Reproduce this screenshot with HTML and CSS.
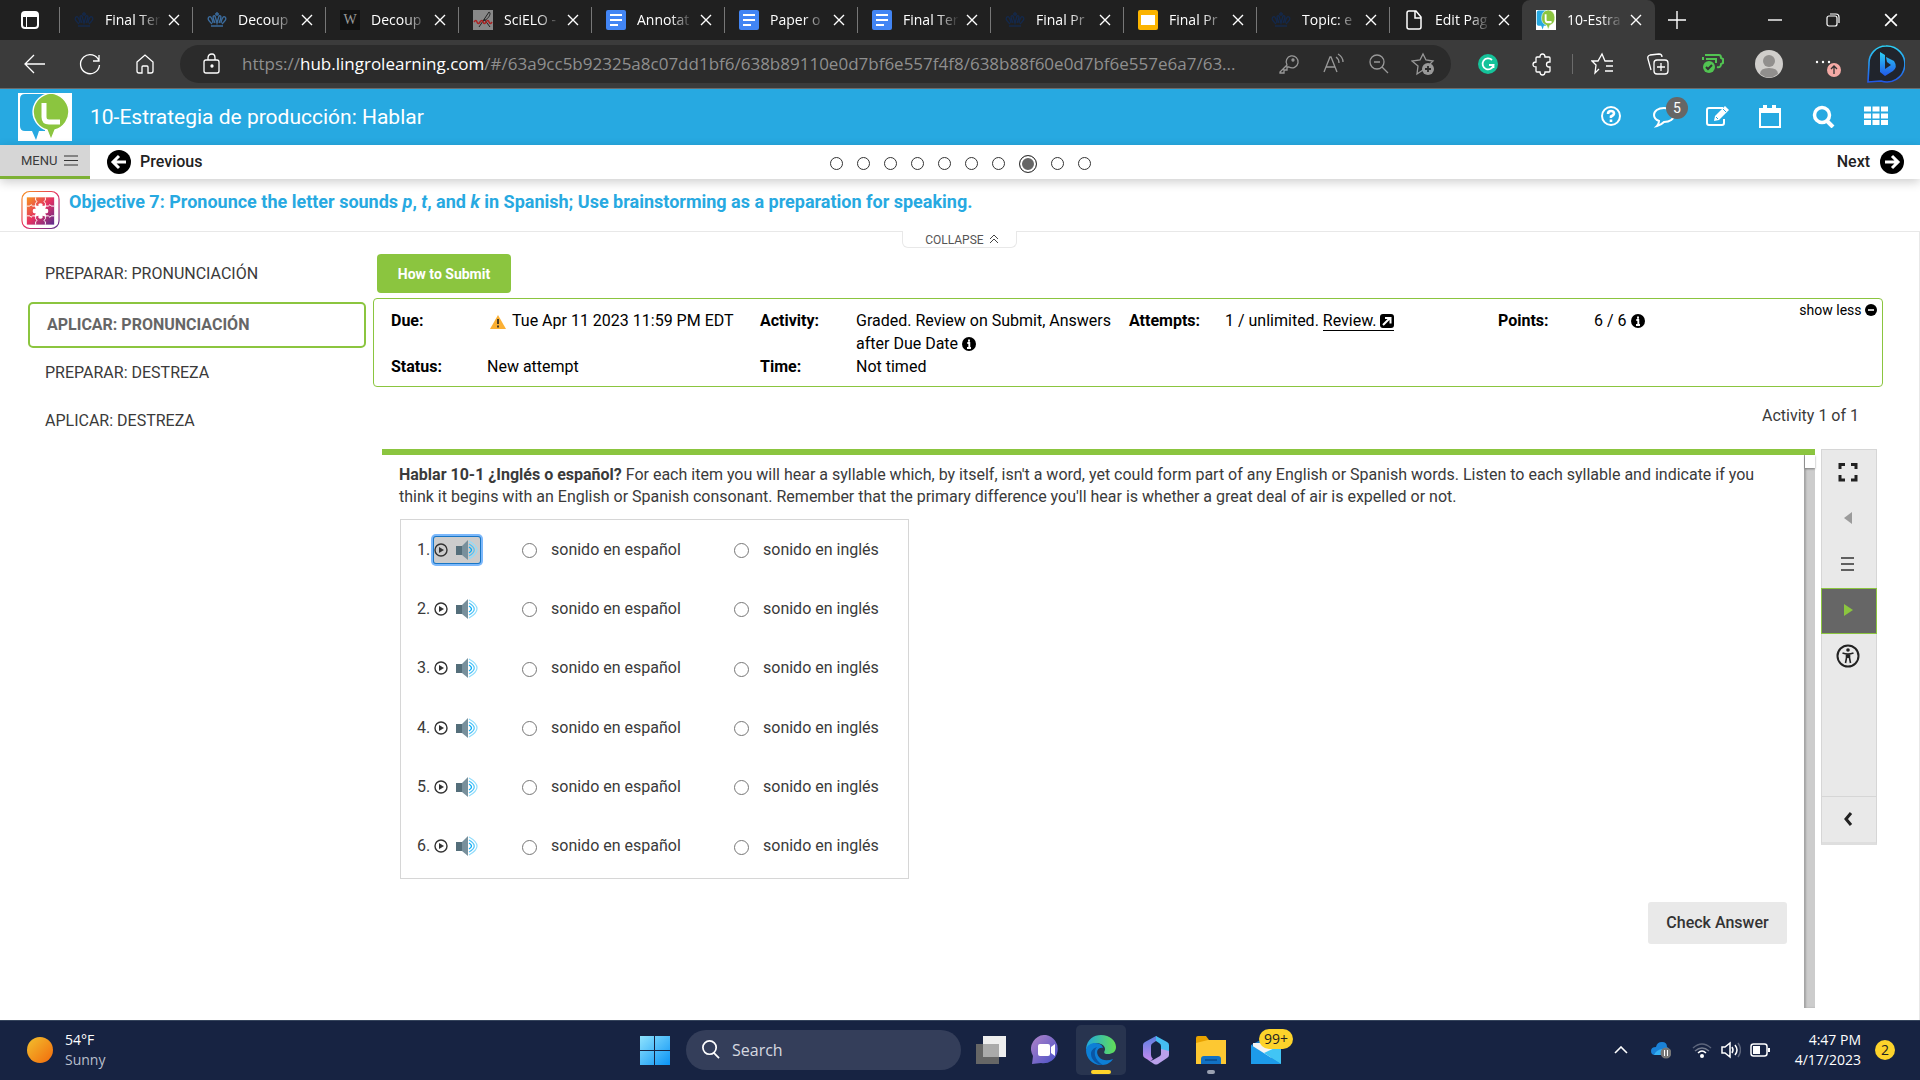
FILE: index.html
```html
<!DOCTYPE html>
<html lang="en">
<head>
<meta charset="utf-8">
<title>10-Estrategia de producción: Hablar</title>
<link rel="stylesheet" href="styles.css">
</head>
<body>
<svg class="defs" aria-hidden="true">
  <symbol id="x" viewBox="0 0 12 12"><path d="M1 1l10 10M11 1L1 11" stroke="#fff" stroke-width="1.4" fill="none"/></symbol>
  <symbol id="crown" viewBox="0 0 20 20"><path d="M4 16h12M5 14C2 11 0 9 2 7c1-1 3 0 4 6M15 14c3-3 5-5 3-7-1-1-3 0-4 6M8 13C5 7 6 5 8 6l2 7 2-7c2-1 3 1 0 7M10 2v4M8 4h4" fill="none" stroke="currentColor" stroke-width="1.4"/></symbol>
  <symbol id="doc" viewBox="0 0 20 20"><rect width="20" height="20" rx="2" fill="#4285f4"/><path d="M4 5h12M4 10h12M4 15h8" stroke="#fff" stroke-width="2.2"/></symbol>
  <symbol id="brand" viewBox="0 0 54 48"><path fill="#fff" d="M0 0h54v48H0z"/><path d="M7 1h20v37h-6l-3 9-4-9H7q-5 0-5-5V6q0-5 5-5z" fill="#27a9e1"/><path d="M33 0a20 19 0 0 1 4 37l-4 10-4-10A20 19 0 0 1 33 0z" fill="#8bc53f" stroke="#fff" stroke-width="1.4"/><path d="M26 10v14q0 5 5 5h11" fill="none" stroke="#fff" stroke-width="5"/></symbol>
  <symbol id="play" viewBox="0 0 14 14"><circle cx="7" cy="7" r="6" fill="none" stroke="#333" stroke-width="1.4"/><path d="M5 4l5 3-5 3z" fill="#333"/></symbol>
  <symbol id="speaker" viewBox="0 0 22 20"><path d="M0 6h6v9H0z" fill="#546e7a"/><path d="M6 6l6-6v20l-6-5z" fill="#78909c"/><path d="M13 7q5 3 0 6" fill="none" stroke="#03a9f4" stroke-width="1.300"/><path d="M13 4q10.500 6 0 12" fill="none" stroke="#4fc3f7" stroke-width="1.200"/><path d="M13 1q16 9 0 18" fill="none" stroke="#90dcfb" stroke-width="1.200"/></symbol>
  <symbol id="info" viewBox="0 0 14 14"><circle cx="7" cy="7" r="7" fill="#000"/><path d="M7 2.500v2.200M5.300 6h2v5M5 11h4" stroke="#fff" stroke-width="1.900" fill="none"/></symbol>
  <symbol id="arrow" viewBox="0 0 24 24"><circle cx="12" cy="12" r="12" fill="#000"/><path d="M5 12h13M12 6l6 6-6 6" fill="none" stroke="#fff" stroke-width="3"/></symbol>
</svg>

<div class="tabs">
  <svg class="tabmenu" viewBox="0 0 18 18"><rect x="1" y="1" width="16" height="16" rx="3" fill="none" stroke="#fff" stroke-width="2"/><path d="M1 2h16v4H1z" fill="#fff"/><path d="M5.500 5v11" stroke="#fff"/></svg>
  <div class="tab"><svg class="fav navy"><use href="#crown"/></svg><span class="name">Final Ter</span><button aria-label="Close"><svg><use href="#x"/></svg></button></div>
  <div class="tab"><svg class="fav steel"><use href="#crown"/></svg><span class="name">Decoup</span><button aria-label="Close"><svg><use href="#x"/></svg></button></div>
  <div class="tab"><span class="fav w">W</span><span class="name">Decoup</span><button aria-label="Close"><svg><use href="#x"/></svg></button></div>
  <div class="tab"><svg class="fav" viewBox="0 0 20 20"><path fill="#888" d="M0 0h20v20H0z"/><path d="M6 17L16 2c3 1-1 8-6 9M11 9l6 8" stroke="#222" fill="none"/><path d="M1 12q2-3 3 0t3 0 3 0 3 0 3 0 3 0" stroke="#a22" fill="none" stroke-width="1.500"/></svg><span class="name">SciELO -</span><button aria-label="Close"><svg><use href="#x"/></svg></button></div>
  <div class="tab"><svg class="fav"><use href="#doc"/></svg><span class="name">Annotat</span><button aria-label="Close"><svg><use href="#x"/></svg></button></div>
  <div class="tab"><svg class="fav"><use href="#doc"/></svg><span class="name">Paper o</span><button aria-label="Close"><svg><use href="#x"/></svg></button></div>
  <div class="tab"><svg class="fav"><use href="#doc"/></svg><span class="name">Final Ter</span><button aria-label="Close"><svg><use href="#x"/></svg></button></div>
  <div class="tab"><svg class="fav navy"><use href="#crown"/></svg><span class="name">Final Pr</span><button aria-label="Close"><svg><use href="#x"/></svg></button></div>
  <div class="tab"><svg class="fav" viewBox="0 0 20 20"><rect width="20" height="20" rx="2" fill="#fbb400"/><path d="M3 5h14v10H3z" fill="#fff"/></svg><span class="name">Final Pr</span><button aria-label="Close"><svg><use href="#x"/></svg></button></div>
  <div class="tab"><svg class="fav navy"><use href="#crown"/></svg><span class="name">Topic: e</span><button aria-label="Close"><svg><use href="#x"/></svg></button></div>
  <div class="tab"><svg class="fav" viewBox="0 0 20 20"><path d="M5 1h7l5 6v10q0 2-2 2H5q-2 0-2-2V3q0-2 2-2zM11 1v7h6" fill="none" stroke="#fff" stroke-width="1.500"/></svg><span class="name">Edit Pag</span><button aria-label="Close"><svg><use href="#x"/></svg></button></div>
  <div class="tab active"><svg class="fav" viewBox="0 0 54 48" preserveAspectRatio="none"><use href="#brand"/></svg><span class="name">10-Estra</span><button aria-label="Close"><svg><use href="#x"/></svg></button></div>
  <button class="newtab" aria-label="New tab"><svg viewBox="0 0 18 18"><path d="M9 0v18M0 9h18" stroke="#fff" stroke-width="1.400"/></svg></button>
  <div class="wincontrols">
    <button aria-label="Minimize"><svg viewBox="0 0 14 14"><path d="M0 7h14" stroke="#fff" stroke-width="1.400"/></svg></button>
    <button aria-label="Restore"><svg viewBox="0 0 14 14"><rect x="1" y="3" width="10" height="10" rx="2" fill="none" stroke="#fff" stroke-width="1.200"/><path d="M4 1h6q3 0 3 3v6" fill="none" stroke="#fff" stroke-width="1.200"/></svg></button>
    <button aria-label="Close window"><svg viewBox="0 0 12 12"><use href="#x"/></svg></button>
  </div>
</div>

<div class="toolbar">
  <div class="navs">
    <button aria-label="Back"><svg viewBox="0 0 24 24"><path d="M22 12H3M11 3l-9 9 9 9"/></svg></button>
    <button aria-label="Reload"><svg viewBox="0 0 24 24"><path d="M21 9a9.500 9.500 0 1 0 .5 4M21 3v6h-6"/></svg></button>
    <button aria-label="Home"><svg viewBox="0 0 24 24"><path d="M4 10l8-7 8 7v9q0 2-2 2h-3v-6q0-1-1-1h-4q-1 0-1 1v6H6q-2 0-2-2z"/></svg></button>
  </div>
  <div class="address">
    <svg viewBox="0 0 24 24"><rect x="4" y="8" width="15" height="13" rx="2"/><path d="M8 8V6q0-4 4-4 3 0 3 4v2"/><circle cx="12" cy="14" r="1" fill="#fff"/></svg>
    <span class="url">https://<b>hub.lingrolearning.com</b>/#/63a9cc5b92325a8c07dd1bf6/638b89110e0d7bf6e557f4f8/638b88f60e0d7bf6e557e6a7/63...</span>
    <div class="inbar">
      <svg viewBox="0 0 24 24"><path d="M11 13L4 20v1h4v-3h3v-3h2a6 6 0 1 0-2-2z"/><circle cx="17" cy="8" r="1"/></svg>
      <svg viewBox="0 0 24 24"><path d="M3 20L9 5h1l6 15M5 15h9M15 5q3 2 3 6M17 2q5 3 5 8"/></svg>
      <svg viewBox="0 0 24 24"><circle cx="11" cy="10" r="7"/><path d="M16 15l6 6M8 10h6"/></svg>
      <svg viewBox="0 0 24 24"><path d="M12 18l-6 4 1-8-6-5 8-1 3-6 3 6 7 1-3 3"/><circle cx="17" cy="17" r="6" fill="#999" stroke="none"/><path d="M17 14v6M14 17h6" stroke="#2b2b2b" stroke-width="1.800"/></svg>
    </div>
  </div>
  <div class="extensions">
    <button aria-label="Grammarly"><svg viewBox="0 0 24 24"><circle cx="12" cy="12" r="10" fill="#15c39a" stroke="none"/><path d="M16 8a5.500 5.500 0 1 0 1.500 5H13M17.500 12v4" stroke-width="1.800"/></svg></button>
    <button aria-label="Extensions"><svg viewBox="0 0 24 24"><path d="M6 5h3q0-3 2.500-3T14 5h4q1 0 1 1v4h-1q-2.500 0-2.500 2.500T18 15h1v4q0 1-1 1h-4q0 3-2.500 3T9 20H6q-1 0-1-1v-4q-3 0-3-2.500T5 10V6q0-1 1-1z"/></svg></button>
    <i></i>
    <button aria-label="Favorites"><svg viewBox="0 0 24 24"><path d="M8 17l-4 4 1-8-4-4h6l4-7 3 7h8M15 14h7M14 19h8"/></svg></button>
    <button aria-label="Collections"><svg viewBox="0 0 24 24"><rect x="8" y="8" width="14" height="14" rx="3"/><path d="M15 11v8M11 15h8M5 18L2 7q-1-3 2-4l9-1q3 0 3 3"/></svg></button>
    <button aria-label="Battery saver"><svg class="green" viewBox="0 0 24 24"><path d="M4 3h14q2 0 2 3l2 1v4l-2 1q0 4-4 3M2 8V5M5 7h10v4"/><circle cx="8" cy="15" r="6" fill="#52c452" stroke="none"/><path d="M5 15l2 2 4-4" stroke="#333"/></svg></button>
    <button class="profile" aria-label="Profile"><svg class="avatar" viewBox="0 0 28 28"><circle cx="14" cy="14" r="14" fill="#d0cecb" stroke="none"/><circle cx="14" cy="11" r="6" fill="#918f8d" stroke="none"/><path d="M5 24q0-6 9-6t9 6q-9 7-18 0z" fill="#918f8d" stroke="none"/></svg></button>
    <button class="menu-more" aria-label="More"><svg class="more" viewBox="0 0 30 28"><g fill="#fff" stroke="none"><circle cx="4" cy="12" r="1.200"/><circle cx="10" cy="12" r="1.200"/><circle cx="16" cy="12" r="1.200"/></g><circle cx="21" cy="20" r="7" fill="#f5aaa5" stroke="none"/><path d="M21 24v-8M18 19l3-3 3 3" stroke="#333"/></svg></button>
    <button aria-label="Bing"><svg class="bing" viewBox="0 0 38 38"><defs><linearGradient id="bg" x2="0" y2="1"><stop stop-color="#2bd0f5"/><stop offset="1" stop-color="#2157e8"/></linearGradient></defs><path d="M19 1a18 18 0 1 1-5 35l-13 1 1-18A17 17 0 0 1 19 1z" fill="#20242c" stroke="url(#bg)" stroke-width="1.600"/><path d="M13 7l5 3v14l6-4-4-3-1-5 8 4q4 6-1 10l-8 5-5-4z" fill="url(#bg)" stroke="none"/></svg></button>
  </div>
</div>

<header class="appbar">
  <svg class="logo" viewBox="0 0 54 48"><use href="#brand"/></svg>
  <h1>10-Estrategia de producción: Hablar</h1>
  <div class="appicons">
    <button aria-label="Help"><svg viewBox="0 0 24 24"><circle cx="12" cy="12" r="9"/><path d="M9 10q0-3 3-3t3 2.500q0 1.500-3 3V14M12 15.500V18" stroke-width="2.600"/></svg></button>
    <button aria-label="Messages"><svg viewBox="0 0 24 24"><path d="M12 4c6 0 10 3 10 7s-4 7-10 7q-3 3-7 4 2-2 2-5-5-2-5-6c0-4 4-7 10-7z"/></svg><span class="count">5</span></button>
    <button aria-label="Write"><svg viewBox="0 0 24 24"><path d="M18 4H4Q2 4 2 6v13q0 2 2 2h13q2 0 2-2v-4"/><path d="M9 17l1-5L20 2l4 4-10 10z" fill="#fff" stroke="none"/><path d="M18 5l3 3M11 13l2 2" stroke="#27a9e1" stroke-width="1"/></svg></button>
    <button aria-label="Calendar"><svg viewBox="0 0 24 24"><path d="M2 5h20v18H2z"/><path d="M1 4h22v5H1zM5 1h4v5H5zM14 1h4v5h-4z" fill="#fff" stroke="none"/></svg></button>
    <button aria-label="Search"><svg viewBox="0 0 24 24"><circle cx="11" cy="11" r="7.500" stroke-width="3.500"/><path d="M16 17l6 6" stroke-width="4"/></svg></button>
    <button aria-label="Apps"><svg viewBox="0 0 24 24"><path d="M0 5h24M0 12h24M0 18.500h24" stroke-width="5" stroke-dasharray="7 1.500"/></svg></button>
  </div>
</header>

<nav class="pager">
  <button class="menu">MENU <svg viewBox="0 0 14 11"><path d="M0 1h14M0 5.500h14M0 10h14"/></svg></button>
  <a class="prev" href="#"><svg class="flip"><use href="#arrow"/></svg>Previous</a>
  <div class="dots"><i></i><i></i><i></i><i></i><i></i><i></i><i></i><i class="on"></i><i></i><i></i></div>
  <a class="next" href="#">Next<svg><use href="#arrow"/></svg></a>
</nav>

<section class="objective">
  <svg viewBox="0 0 40 40"><defs><linearGradient id="pz" x2="1" y2="1"><stop stop-color="#f7941e"/><stop offset=".5" stop-color="#e32f62"/><stop offset="1" stop-color="#5b2d90"/></linearGradient></defs><rect x="1" y="1" width="38" height="38" rx="8" fill="#fff" stroke="url(#pz)" stroke-width="1.200"/><path d="M6 7h28v28H6z" fill="url(#pz)"/><path d="M15 7v3q3 1 0 3v3M25 7v3q-3 1 0 3v3M6 16h3q1-3 3 0h3M6 26h3q1 3 3 0h3M34 16h-3q-1-3-3 0h-3M34 26h-3q-1 3-3 0h-3M15 35v-3q3-1 0-3v-3M25 35v-3q-3-1 0-3v-3" fill="none" stroke="#fff"/><path d="M14 15l4 1q-1-3 2-3t2 3l4-1-1 4q3-1 3 2t-3 2l1 4-4-1q1 3-2 3t-2-3l-4 1 1-4q-3 1-3-2t3-2z" fill="#fff"/></svg>
  <h2>Objective 7: Pronounce the letter sounds <em>p</em>, <em>t</em>, and <em>k</em> in Spanish; Use brainstorming as a preparation for speaking.</h2>
  <button class="collapse">COLLAPSE <svg viewBox="0 0 10 10"><path d="M1 5l4-4 4 4M1 9l4-4 4 4"/></svg></button>
</section>

<main>
  <aside>
    <a href="#">PREPARAR: PRONUNCIACIÓN</a>
    <a href="#" class="current">APLICAR: PRONUNCIACIÓN</a>
    <a href="#">PREPARAR: DESTREZA</a>
    <a href="#">APLICAR: DESTREZA</a>
  </aside>
  <div class="content">
    <button class="how">How to Submit</button>
    <section class="details">
      <dl>
        <dt>Due:</dt><dd><svg class="warn" viewBox="0 0 16 14"><path d="M8 0l8 14H0z" fill="#fbb034"/><path d="M8 4v5M8 10.500v2" stroke="#222" stroke-width="1.600"/></svg>Tue Apr 11 2023 11:59 PM EDT</dd>
        <dt>Activity:</dt><dd>Graded. Review on Submit, Answers after Due Date <svg class="sm"><use href="#info"/></svg></dd>
        <dt>Attempts:</dt><dd>1 / unlimited. <a href="#">Review. <svg class="sm" viewBox="0 0 14 14"><rect width="14" height="14" rx="3" fill="#000"/><path d="M3 11l7-7M5 4h5.500v5.500" stroke="#fff" stroke-width="2" fill="none"/></svg></a></dd>
        <dt>Points:</dt><dd>6 / 6 <svg class="sm"><use href="#info"/></svg></dd>
        <dt>Status:</dt><dd>New attempt</dd>
        <dt>Time:</dt><dd>Not timed</dd>
      </dl>
      <button class="less">show less <svg viewBox="0 0 12 12"><circle cx="6" cy="6" r="6"/><path d="M3 6h6" stroke="#fff" stroke-width="1.600"/></svg></button>
    </section>
    <p class="counter">Activity 1 of 1</p>
    <div class="activity">
      <section class="panel">
        <div class="work">
          <p><b>Hablar 10-1 ¿Inglés o español?</b> For each item you will hear a syllable which, by itself, isn't a word, yet could form part of any English or Spanish words. Listen to each syllable and indicate if you think it begins with an English or Spanish consonant. Remember that the primary difference you'll hear is whether a great deal of air is expelled or not.</p>
          <form class="questions">
            <div class="q"><span>1.</span><button type="button" class="audio focus" aria-label="Play 1"><svg class="pl"><use href="#play"/></svg><svg class="sp"><use href="#speaker"/></svg></button><label><input type="radio" name="q1">sonido en español</label><label><input type="radio" name="q1">sonido en inglés</label></div>
            <div class="q"><span>2.</span><button type="button" class="audio" aria-label="Play 2"><svg class="pl"><use href="#play"/></svg><svg class="sp"><use href="#speaker"/></svg></button><label><input type="radio" name="q2">sonido en español</label><label><input type="radio" name="q2">sonido en inglés</label></div>
            <div class="q"><span>3.</span><button type="button" class="audio" aria-label="Play 3"><svg class="pl"><use href="#play"/></svg><svg class="sp"><use href="#speaker"/></svg></button><label><input type="radio" name="q3">sonido en español</label><label><input type="radio" name="q3">sonido en inglés</label></div>
            <div class="q"><span>4.</span><button type="button" class="audio" aria-label="Play 4"><svg class="pl"><use href="#play"/></svg><svg class="sp"><use href="#speaker"/></svg></button><label><input type="radio" name="q4">sonido en español</label><label><input type="radio" name="q4">sonido en inglés</label></div>
            <div class="q"><span>5.</span><button type="button" class="audio" aria-label="Play 5"><svg class="pl"><use href="#play"/></svg><svg class="sp"><use href="#speaker"/></svg></button><label><input type="radio" name="q5">sonido en español</label><label><input type="radio" name="q5">sonido en inglés</label></div>
            <div class="q"><span>6.</span><button type="button" class="audio" aria-label="Play 6"><svg class="pl"><use href="#play"/></svg><svg class="sp"><use href="#speaker"/></svg></button><label><input type="radio" name="q6">sonido en español</label><label><input type="radio" name="q6">sonido en inglés</label></div>
          </form>
          <button class="check">Check Answer</button>
        </div>
        <div class="gutter"><div class="knob"></div></div>
      </section>
      <div class="rail">
        <button aria-label="Full screen"><svg viewBox="0 0 24 24"><path d="M4 9V4.500h5M15 4.500h5V9M20 15v5h-5M9 20H4v-5" fill="none" stroke="#222" stroke-width="3"/></svg></button>
        <button aria-label="Previous item"><svg viewBox="0 0 24 24"><path d="M16 6v12l-8-6z" fill="#9b9b9b"/></svg></button>
        <button aria-label="List"><svg viewBox="0 0 24 24"><path d="M5 6h13M5 12h13M5 18h13" stroke="#333" stroke-width="1.400"/></svg></button>
        <button class="lit" aria-label="Next item"><svg viewBox="0 0 24 24"><path d="M8 6v12l9-6z" fill="#8bc53f"/></svg></button>
        <button aria-label="Accessibility"><svg viewBox="0 0 24 24"><circle cx="12" cy="12" r="10.500" fill="none" stroke="#222" stroke-width="2"/><circle cx="12" cy="6" r="1.800" fill="#222"/><path d="M6.500 9q5.500 2 11 0M12 10v4M10.500 10v4L9.500 19M13.500 10v4l1 5" fill="none" stroke="#222" stroke-width="1.600"/></svg></button>
        <button class="fold" aria-label="Fold"><svg viewBox="0 0 24 24"><path d="M15 6l-5 6 5 6" fill="none" stroke="#222" stroke-width="3"/></svg></button>
      </div>
    </div>
  </div>
</main>

<footer class="taskbar">
  <div class="weather"><i></i><p>54°F<br><span>Sunny</span></p></div>
  <div class="apps">
    <button aria-label="Start"><svg viewBox="0 0 30 30"><defs><linearGradient id="wn" x2="1" y2="1"><stop stop-color="#8fe3fd"/><stop offset="1" stop-color="#0a93f5"/></linearGradient></defs><path d="M0 1h14v14H0zM15 1h15v14H15zM0 16h14v14H0zM15 16h15v14H15z" fill="url(#wn)"/></svg></button>
    <label class="search"><svg viewBox="0 0 20 20"><circle cx="9" cy="8" r="7" fill="none" stroke="#fff" stroke-width="1.800"/><path d="M13 13l6 6" stroke="#fff" stroke-width="1.800"/></svg><input type="text" placeholder="Search" aria-label="Search"></label>
    <button aria-label="Task view"><svg viewBox="0 0 30 30"><path d="M7 1h23v21H7z" fill="#eee"/><path d="M0 9h23v20H0z" fill="#666"/><path d="M7 9h16v13H7z" fill="#aaa"/></svg></button>
    <button aria-label="Chat"><svg viewBox="0 0 30 30"><defs><linearGradient id="ch" x2="1" y2="1"><stop stop-color="#b184c8"/><stop offset="1" stop-color="#4650c8"/></linearGradient></defs><path d="M15 0a14 14 0 1 1-5 28l-9 1 1-8A14 14 0 0 1 15 0z" fill="url(#ch)"/><rect x="7" y="9" width="12" height="12" rx="2" fill="#fff"/><path d="M20 12l4-3v12l-4-3z" fill="#fff"/></svg></button>
    <button class="open" aria-label="Edge"><svg viewBox="0 0 30 30"><defs><linearGradient id="e1" x2="1"><stop stop-color="#1fa7df"/><stop offset="1" stop-color="#63df55"/></linearGradient></defs><path d="M0 14C1 4 8 0 15 0c9 0 15 6 15 12 0 5-4 7-8 7-5 0-4-2-3-4 1-6-9-9-13-5-3 2-5 4-6 4z" fill="url(#e1)"/><path d="M0 15c1-5 5-7 9-7 5 0 8 3 8 5-5-1-8 4-4 9 3 4 9 4 14 2-3 5-8 6-12 6C6 30 0 23 0 15z" fill="#0d7fd6"/><path d="M11 12c-4 4-3 13 6 18-6 0-12-5-12-11 0-4 3-6 6-7z" fill="#0a56a5"/></svg></button>
    <button aria-label="Microsoft 365"><svg viewBox="0 0 30 30"><defs><linearGradient id="m1" x2="0" y2="1"><stop stop-color="#5a7fe0"/><stop offset="1" stop-color="#c58af0"/></linearGradient></defs><path d="M15 1L4 7q-2 1-2 3v10q0 2 2 3l5 3 3-2q-2-2-2-4v-9q0-2 2-3l6-4z" fill="url(#m1)"/><path d="M15 1l11 6q2 1 2 3v10l-8-4v-5q0-2-2-3l-3-2z" fill="#45bdf2"/><path d="M28 16v4q0 2-2 3l-9 6q-2 1-4 0l-6-4q3 1 5 0l7-4q1-1 1-2v-5z" fill="#b9a0ea"/></svg></button>
    <button class="run" aria-label="File Explorer"><svg viewBox="0 0 30 30"><path d="M0 3q0-2 2-2h8l3 4v5H0z" fill="#e8a200"/><path d="M0 8l12-3h18v24H0z" fill="#fdc832"/><path d="M5 29v-5q0-3 3-3h14q3 0 3 3v5z" fill="#1272c4"/><path d="M9 25h12" stroke="#0a4c8c" stroke-width="1.500"/></svg></button>
    <button class="mail" aria-label="Mail"><svg viewBox="0 0 30 30"><path d="M0 10L15 2l15 8v19H0z" fill="#1272c4"/><path d="M2 8h26v10l-12 7L2 15z" fill="#f4f4f4"/><path d="M0 10l30 19H0z" fill="#1d9bea"/><path d="M30 10v19L13 18z" fill="#41c5f5"/></svg><span>99+</span></button>
  </div>
  <div class="tray">
    <svg class="up" viewBox="0 0 14 8"><path d="M1 7l6-6 6 6" fill="none" stroke="#fff" stroke-width="1.600"/></svg>
    <svg class="cloud" viewBox="0 0 20 18"><path d="M4 14q-4 0-4-4t5-4q1-5 6-5t5 5q3 1 2 6z" fill="#1a82d8"/><path d="M3 14q2-5 8-6l3 6z" fill="#35b0f3"/><circle cx="15" cy="12" r="5.500" fill="#777"/><path d="M13.500 9v6M16.500 9v6" stroke="#fff"/></svg>
    <svg viewBox="0 0 20 18"><g fill="none" stroke="#fff" stroke-width="1.500"><path d="M1 7q9-8 18 0" opacity=".3"/><path d="M3 10q7-6 14 0" opacity=".4"/><path d="M6 12q4-4 8 0"/></g><circle cx="10" cy="15" r="2" fill="#fff"/></svg>
    <svg viewBox="0 0 20 18"><g fill="none" stroke="#fff" stroke-width="1.500"><path d="M1 6h3l5-4v14l-5-4H1zM11 6q2 3 0 6M14 4q4 5 0 10"/><path d="M17 2q5 7 0 14" opacity=".3"/></g></svg>
    <svg viewBox="0 0 20 18"><rect x="1" y="3" width="16" height="12" rx="2.500" fill="none" stroke="#fff" stroke-width="1.500"/><path d="M3 5h7v8H3zM18 7h2v4h-2z" fill="#fff"/></svg>
    <p>4:47 PM<br>4/17/2023</p>
    <span class="notes">2</span>
  </div>
</footer>
</body>
</html>
```
FILE: styles.css
```css
* { box-sizing: border-box; }
body { margin: 0; min-height: 100vh; display: flex; flex-direction: column; background: #fff; color: #3a3a3a; font: 16px/22px Roboto, sans-serif; }
button { border: 0; background: none; padding: 0; margin: 0; font: inherit; color: inherit; }
a { color: inherit; text-decoration: none; }
p, h1, h2, dl, dd { margin: 0; }
.defs { position: absolute; width: 0; height: 0; }

.tabs { display: flex; height: 40px; background: #202020; color: #fff; font: 14px/40px "Open Sans", sans-serif; }
.tabmenu { width: 18px; height: 18px; margin: 11px 20px 11px 21px; flex: none; }
.tab { display: flex; align-items: center; flex: 0 1 133px; padding-left: 14px; border-left: 1px solid #777; border-image: linear-gradient(#202020 20%, #777 20%, #777 80%, #202020 80%) 1; }
.tab.active { border: 0; background: #3b3b3b; border-radius: 8px 8px 0 0; }
.fav { width: 20px; height: 20px; flex: none; }
.navy { color: #14284a; }
.steel { color: #3b6b9c; }
.w { background: #111; color: #999; font: 14px/20px "Liberation Serif", serif; text-align: center; }
.name { width: 56px; margin-left: 11px; overflow: hidden; white-space: nowrap; mask-image: linear-gradient(90deg, #000 60%, transparent); }
.tab button { display: flex; margin-left: 7px; }
.tab button svg { width: 12px; height: 12px; }
.newtab { display: flex; align-items: center; margin-left: 13px; }
.newtab svg { width: 18px; height: 18px; }
.wincontrols { display: flex; align-items: center; margin-left: auto; }
.wincontrols button { width: 58px; display: flex; justify-content: center; }
.wincontrols svg { width: 14px; height: 14px; }

.toolbar { display: flex; align-items: center; height: 49px; padding: 0 7px 1px 23px; background: #3b3b3b; border-bottom: 1px solid #6b6b6b; }
.toolbar svg { width: 24px; height: 24px; flex: none; fill: none; stroke: #fff; stroke-width: 1.3; }
.toolbar button { display: flex; justify-content: center; }
.navs { display: flex; gap: 31px; margin-right: 23px; }
.address { flex: 1; min-width: 0; display: flex; align-items: center; height: 38px; padding: 0 16px 0 20px; border-radius: 19px; background: #2b2b2b; }
.url { flex: 1; margin-left: 18px; color: #8f8f8f; font: 17px/38px "Open Sans", sans-serif; white-space: nowrap; overflow: hidden; }
.url b { color: #fff; font-weight: 400; }
.inbar { display: flex; gap: 21px; }
.inbar svg { stroke: #999; }
.extensions { display: flex; align-items: center; margin-left: 9px; }
.extensions button { width: 55px; }
.extensions .profile { width: 58px; }
.extensions .menu-more { width: 60px; }
.extensions i { width: 1px; height: 20px; margin: 0 2px; background: #6b6b6b; }
.toolbar .green { stroke: #52c452; stroke-width: 2; }
.toolbar .avatar { width: 28px; height: 28px; }
.toolbar .more { width: 30px; height: 28px; }
.toolbar .bing { width: 38px; height: 38px; }

.appbar { display: flex; align-items: center; height: 56px; padding: 0 32px 0 18px; background: #27a9e1; color: #fff; }
.logo { width: 54px; height: 48px; }
.appbar h1 { flex: 1; margin-left: 18px; font-size: 21px; line-height: 28px; font-weight: 400; }
.appicons { display: flex; gap: 29px; padding-bottom: 3px; }
.appicons button { position: relative; display: flex; }
.appicons svg { width: 24px; height: 24px; fill: none; stroke: #fff; stroke-width: 2; }
.count { position: absolute; left: 14px; top: -7px; width: 22px; height: 22px; border-radius: 50%; background: #666; font-size: 14px; line-height: 22px; text-align: center; }

.pager { position: relative; z-index: 1; display: flex; align-items: center; height: 34px; padding-right: 16px; box-shadow: 0 3px 10px #0003; font-weight: 500; }
.menu { display: flex; align-items: center; gap: 7px; width: 90px; height: 34px; padding-left: 21px; background: #d6d6d6; border-bottom: 3px solid #7db135; font-size: 13px; font-weight: 400; }
.menu svg { width: 14px; height: 11px; stroke: #333; }
.prev, .next { display: flex; align-items: center; gap: 9px; flex: 1; padding-left: 17px; color: #222; }
.next { justify-content: flex-end; gap: 10px; }
.pager a svg { width: 24px; height: 24px; }
.flip { transform: rotate(180deg); }
.dots { display: flex; align-items: center; gap: 14px; padding-top: 3px; margin-right: 73px; }
.dots i { width: 13px; height: 13px; border: 1px solid #333; border-radius: 50%; }
.dots .on { width: 18px; height: 18px; background: #666; box-shadow: inset 0 0 0 2px #fff; }

.objective { position: relative; display: flex; align-items: flex-start; gap: 9px; height: 53px; padding: 11px 21px 0; border-bottom: 1px solid #e8e8e8; }
.objective > svg { width: 39px; height: 40px; flex: none; }
.objective h2 { color: #27a9e1; font-size: 18px; line-height: 24px; font-weight: 700; }
.collapse { position: absolute; top: 52px; left: 47%; width: 115px; height: 17px; padding-left: 4px; border: 1px solid #e8e8e8; border-top: 0; border-radius: 0 0 6px 6px; background: #fff; font-size: 12px; line-height: 18px; color: #555; }
.collapse svg { width: 10px; height: 10px; margin-left: 2px; fill: none; stroke: #444; }

main { flex: 1; display: flex; padding-right: 36px; border-right: 1px solid #e8e8e8; }
aside { width: 373px; padding: 19px 7px 0 28px; display: flex; flex-direction: column; gap: 2px; }
aside a { height: 46px; padding-left: 17px; line-height: 46px; }
aside .current { margin-top: 3px; border: 2px solid #8bc53f; border-radius: 5px; line-height: 42px; font-weight: 700; color: #666; }
.content { flex: 1; min-width: 0; display: flex; flex-direction: column; align-items: stretch; padding-top: 22px; }
.how { align-self: flex-start; width: 134px; height: 39px; margin: 0 0 5px 4px; border-radius: 4px; background: #8bc53f; color: #fff; font-size: 14px; font-weight: 700; }
.details { position: relative; border: 1px solid #8bc53f; border-radius: 4px; padding: 10px 15px 8px 17px; color: #000; }
.details dl { display: grid; grid-template-columns: repeat(4, 96px 1fr); line-height: 23px; }
dt { font-weight: 700; }
dd { padding-right: 12px; }
dd a { border-bottom: 1px solid #000; }
.sm { width: 14px; height: 14px; vertical-align: -2px; }
.warn { width: 16px; height: 14px; margin: 0 6px 0 3px; vertical-align: -3px; }
.less { position: absolute; top: 0; right: 5px; font-size: 14px; }
.less svg { width: 12px; height: 12px; vertical-align: -1px; }
.counter { padding: 18px 24px 22px; text-align: right; }
.activity { flex: 1; display: flex; align-items: flex-start; gap: 6px; padding: 0 6px 12px 9px; }
.panel { flex: 1; align-self: stretch; display: flex; border-top: 6px solid #8bc53f; }
.work { flex: 1; display: flex; flex-direction: column; align-items: flex-start; padding: 9px 17px 0; }
.questions { display: flex; flex-direction: column; width: 509px; min-height: 360px; margin: 11px 0 23px 1px; padding-bottom: 2px; border: 1px solid #d6d6d6; }
.q { flex: 1; display: grid; grid-template-columns: 17px 87px 212px 1fr; align-items: center; padding-left: 16px; }
.audio { justify-self: start; display: flex; align-items: center; gap: 8px; height: 26px; padding: 0 2px 0 0; border-radius: 2px; }
.focus { background: #ccc; box-shadow: 0 0 0 1px #1976c5, 0 0 0 3px #7cb8fb; }
.pl { width: 14px; height: 14px; }
.sp { width: 22px; height: 20px; }
.q label { display: flex; align-items: center; }
.q input { width: 15px; height: 15px; margin: 2px 14px 0 1px; }
.check { align-self: flex-end; width: 139px; height: 42px; border-radius: 3px; background: #e9e9e9; font-weight: 500; color: #333; }
.gutter { width: 11px; background: #ccc; box-shadow: inset 2px 0 2px #0003; }
.knob { height: 13px; margin-left: 1px; background: #fff; box-shadow: 0 1px 2px #0006; }
.rail { display: flex; flex-direction: column; width: 56px; min-height: 396px; background: #e9e9e9; border: 1px solid #d6d6d6; border-bottom: 3px solid #dedede; }
.rail button { height: 46px; padding: 0 2px 2px 0; display: flex; align-items: center; justify-content: center; }
.rail svg { width: 24px; height: 24px; }
.rail .lit { margin: 0 -1px; border: 1px solid #8bc53f; background: #666; }
.rail .fold { margin-top: auto; border-top: 1px solid #d6d6d6; }

.taskbar { display: flex; align-items: center; justify-content: space-between; height: 60px; padding: 0 25px 2px 27px; background: #172342; border-top: 1px solid #35445c; color: #fff; font: 14px/20px "Open Sans", sans-serif; }
.weather { display: flex; align-items: center; gap: 12px; width: 613px; }
.weather i { width: 26px; height: 26px; border-radius: 50%; background: linear-gradient(135deg, #f2c12e, #f26a0c); }
.weather span { color: #b9bfcc; }
.apps { display: flex; align-items: center; flex: 1; }
.apps button { position: relative; display: flex; justify-content: center; align-items: center; width: 50px; height: 50px; margin-right: 5px; }
.apps button:first-child { width: 30px; margin-right: 16px; }
.apps svg { width: 30px; height: 30px; }
.search { display: flex; align-items: center; gap: 12px; width: 275px; height: 40px; margin-right: 5px; padding-left: 15px; border-radius: 20px; background: #343e5a; }
.search svg { width: 19px; height: 19px; }
.search input { width: 180px; padding: 0; border: 0; outline: 0; background: none; color: #fff; font: 16px/22px "Open Sans", sans-serif; }
.search input::placeholder { color: #d6d9e0; opacity: 1; }
.apps .open { border-radius: 5px; background: #28344f; }
.open::after, .run::after { content: ""; position: absolute; bottom: 1px; width: 20px; height: 4px; border-radius: 2px; background: #fdd32b; }
.run::after { width: 8px; background: #9aa1b2; }
.mail span { position: absolute; left: 18px; top: 4px; width: 34px; border-radius: 10px; background: #fdd32b; color: #222; text-align: center; }
.tray { display: flex; align-items: center; gap: 9px; }
.tray svg { width: 20px; height: 18px; }
.tray .up { width: 14px; height: 8px; margin-right: 14px; }
.tray .cloud { margin-right: 12px; }
.tray p { text-align: right; margin-left: 16px; }
.notes { width: 20px; height: 20px; margin-left: 5px; border-radius: 50%; background: #fdd32b; color: #222; text-align: center; }
```
